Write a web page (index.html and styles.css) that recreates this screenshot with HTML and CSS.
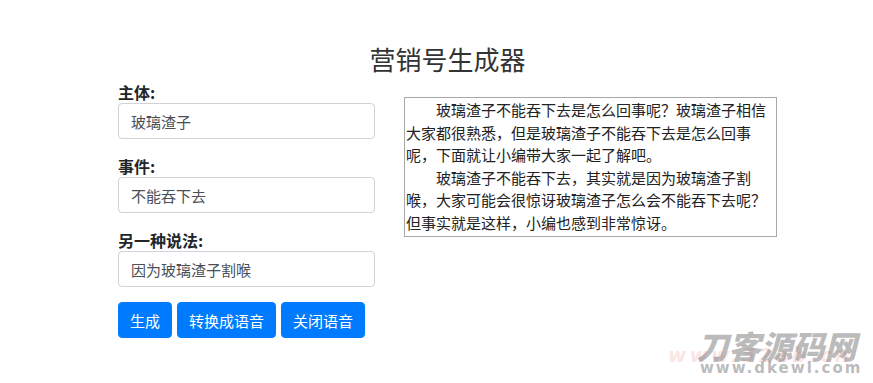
FILE: index.html
```html
<!DOCTYPE html>
<html lang="zh-CN">
<head>
<meta charset="utf-8">
<title>营销号生成器</title>
<link rel="stylesheet" href="styles.css">
</head>
<body>
<div class="page">
  <h1 class="title">营销号生成器</h1>
  <div class="layout">
    <form class="form">
      <div class="group">
        <label class="label">主体:</label>
        <input class="field" type="text" value="玻璃渣子">
      </div>
      <div class="group">
        <label class="label">事件:</label>
        <input class="field" type="text" value="不能吞下去">
      </div>
      <div class="group">
        <label class="label">另一种说法:</label>
        <input class="field" type="text" value="因为玻璃渣子割喉">
      </div>
      <div class="actions">
        <button type="button" class="btn">生成</button>
        <button type="button" class="btn">转换成语音</button>
        <button type="button" class="btn">关闭语音</button>
      </div>
    </form>
    <div class="output">
      <p class="para">玻璃渣子不能吞下去是怎么回事呢？玻璃渣子相信大家都很熟悉，但是玻璃渣子不能吞下去是怎么回事呢，下面就让小编带大家一起了解吧。</p>
      <p class="para">玻璃渣子不能吞下去，其实就是因为玻璃渣子割喉，大家可能会很惊讶玻璃渣子怎么会不能吞下去呢？但事实就是这样，小编也感到非常惊讶。</p>
    </div>
  </div>
</div>
<div class="watermark">
  <div class="wm-red">www.52ab.cn</div>
  <div class="wm-name">刀客源码网</div>
  <div class="wm-url">www.dkewl.com</div>
</div>
</body>
</html>
```

FILE: styles.css
```css
html, body {
  margin: 0;
  padding: 0;
  background: #ffffff;
}

body {
  font-family: "Noto Sans CJK SC", "Noto Sans", "Liberation Sans", sans-serif;
  color: #212529;
  width: 873px;
  height: 383px;
  overflow: hidden;
  position: relative;
}

.page {
  width: 659px;
  margin-left: 118px;
}

.title {
  margin: 43px 0 7px;
  font-size: 26px;
  line-height: 31px;
  font-weight: 400;
  text-align: center;
  color: #333333;
}

.layout {
  display: grid;
  grid-template-columns: 257px 1fr;
  column-gap: 29px;
  align-items: start;
}

.form {
  display: flex;
  flex-direction: column;
  margin: 0;
}

.group {
  display: flex;
  flex-direction: column;
  margin-bottom: 16px;
}

.label {
  font-size: 16px;
  line-height: 22px;
  font-weight: 700;
  color: #212529;
}

.field {
  box-sizing: border-box;
  height: 36px;
  width: 100%;
  padding: 0 12px;
  border: 1px solid #ced4da;
  border-radius: 4px;
  font-family: inherit;
  font-size: 15px;
  color: #495057;
  background: #fff;
  outline: none;
}

.actions {
  display: flex;
  gap: 5px;
  margin-top: -1px;
}

.btn {
  box-sizing: border-box;
  height: 36px;
  padding: 0 11px;
  border: 1px solid #007bff;
  border-radius: 4px;
  background: #007bff;
  color: #ffffff;
  font-family: inherit;
  font-size: 15px;
  line-height: 1;
  cursor: pointer;
}

.output {
  margin-top: 16px;
  border: 1px solid #a8a8a8;
  padding: 1px 1px 2px;
  font-size: 15px;
  line-height: 22.5px;
  color: #222222;
}

.para {
  margin: 0;
  text-indent: 2em;
}

.watermark {
  position: absolute;
  left: 660px;
  top: 326px;
  width: 210px;
  height: 57px;
  pointer-events: none;
}

.wm-red {
  position: absolute;
  left: 8px;
  top: 19px;
  font-family: "DejaVu Sans", sans-serif;
  font-weight: 700;
  font-style: italic;
  font-size: 20px;
  line-height: 20px;
  letter-spacing: 3px;
  color: rgba(230, 90, 90, 0.18);
}

.wm-name {
  position: absolute;
  left: 40px;
  top: 3px;
  font-family: "Noto Sans CJK SC", sans-serif;
  font-weight: 900;
  font-size: 32px;
  line-height: 32px;
  color: rgba(120, 120, 120, 0.5);
  transform: skewX(-14deg);
}

.wm-url {
  position: absolute;
  left: 40px;
  top: 34px;
  font-family: "DejaVu Sans", sans-serif;
  font-weight: 700;
  font-size: 15px;
  line-height: 16px;
  letter-spacing: 2px;
  color: rgba(120, 120, 120, 0.5);
}
```
